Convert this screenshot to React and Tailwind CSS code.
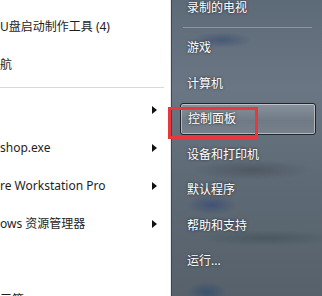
const font = { fontFamily: '"Noto Sans", "Noto Sans CJK SC", sans-serif' };

function Arrow() {
    return (
        <svg width="5" height="8" viewBox="0 0 5 8" className="shrink-0">
            <path d="M0 0 L5 4 L0 8 Z" fill="#111" />
        </svg>
    );
}

function LeftRow({ text, arrow }) {
    return (
        <div className="h-[38px] shrink-0 flex items-center justify-between pr-[13px]">
            <span className="text-[12px] text-[#1e1e1e] whitespace-nowrap">{text}</span>
            {arrow && <Arrow />}
        </div>
    );
}

function RightRow({ text, active }) {
    if (active) {
        return (
            <div className="h-[35.5px] shrink-0 flex items-center pl-[8px] pr-[6px]">
                <div className="relative flex-1 h-[32px] flex items-center pl-[7px] rounded-[3px] border border-[#1f252b] bg-[linear-gradient(180deg,rgba(255,255,255,0.22),rgba(255,255,255,0.06)_55%,rgba(255,255,255,0.12))] shadow-[inset_0_0_0_1px_rgba(255,255,255,0.45)]">
                    <span className="text-[12px] text-white [text-shadow:0_0_3px_rgba(0,0,0,0.7)]">{text}</span>
                    <div className="absolute left-[-13px] top-[3px] w-[90px] h-[32px] border-[3px] border-[#e8383d]" />
                </div>
            </div>
        );
    }
    return (
        <div className="h-[35.5px] shrink-0 flex items-center pl-[15px]">
            <span className="text-[12px] text-white [text-shadow:0_0_3px_rgba(0,0,0,0.7)]">{text}</span>
        </div>
    );
}

export default function App() {
    return (
        <div className="w-[322px] h-[296px] overflow-hidden flex bg-white" style={font}>
            {/* left list */}
            <div className="w-[171px] shrink-0 flex flex-col bg-white border-r border-[#e6e9ee] pt-[8px]">
                <LeftRow text="U盘启动制作工具 (4)" />
                <LeftRow text="航" />
                <div className="h-[1px] shrink-0 bg-[#d5dae2] mr-[6px] my-[3px]" />
                <LeftRow text="" arrow />
                <LeftRow text="shop.exe" arrow />
                <LeftRow text="re Workstation Pro" arrow />
                <LeftRow text="ows 资源管理器" arrow />
                <LeftRow text="" />
                <LeftRow text="三签" />
            </div>

            {/* right glass pane */}
            <div className="flex-1 flex flex-col border-l border-[#3d464f] bg-[#5c6873] bg-[radial-gradient(ellipse_30px_8px_at_50px_40px,rgba(40,60,110,0.45),transparent),radial-gradient(ellipse_60px_10px_at_80px_170px,rgba(60,70,80,0.5),transparent),radial-gradient(ellipse_25px_10px_at_40px_205px,rgba(40,60,120,0.5),transparent),radial-gradient(ellipse_70px_8px_at_95px_238px,rgba(60,75,80,0.5),transparent),radial-gradient(ellipse_20px_10px_at_35px_292px,rgba(40,70,110,0.6),transparent),linear-gradient(180deg,#5d6a77,#6a7683_30%,#5e6a75_60%,#56616b)]">
                <div className="-mt-[10px]">
                    <RightRow text="录制的电视" />
                </div>
                <div className="h-[1px] shrink-0 bg-[#8b959f] ml-[11px] mr-[10px] mt-[1px] mb-[3px]" />
                <RightRow text="游戏" />
                <RightRow text="计算机" />
                <RightRow text="控制面板" active />
                <RightRow text="设备和打印机" />
                <RightRow text="默认程序" />
                <RightRow text="帮助和支持" />
                <RightRow text="运行..." />
            </div>
        </div>
    );
}
